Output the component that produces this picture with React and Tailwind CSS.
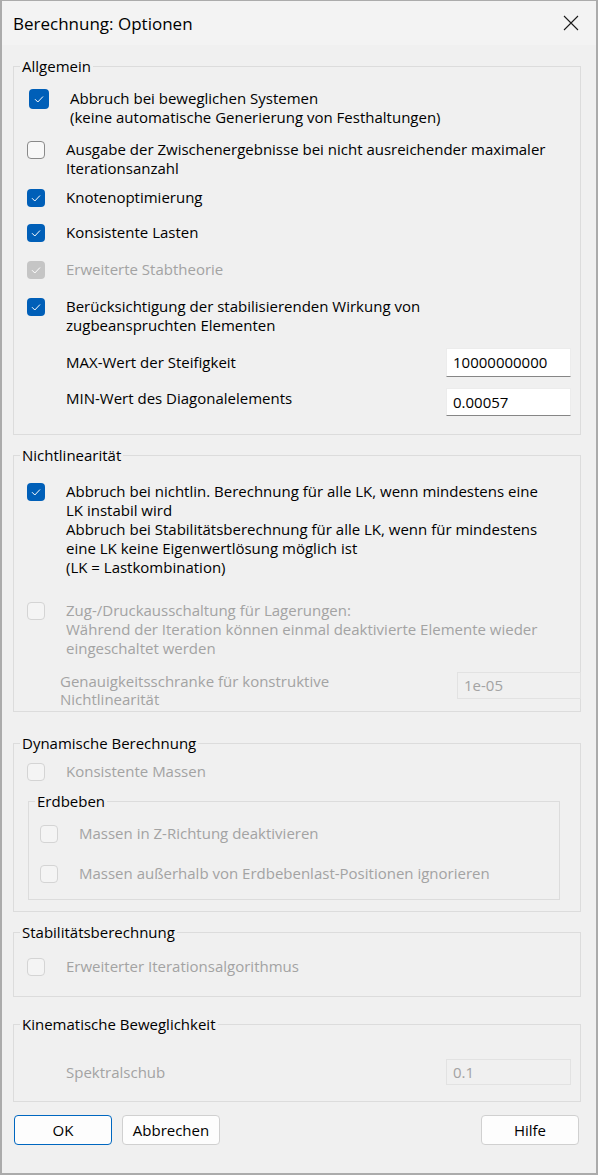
const FONT = "font-['Open_Sans','Noto_Sans',sans-serif]";

function Box({ checked, disabled, big }) {
  const size = big ? "w-[20px] h-[20px]" : "w-[18px] h-[18px]";
  let look = "border border-[#8a8a8a] bg-[#f8f8f8]";
  if (checked && !disabled) look = "bg-[#005fb8]";
  if (checked && disabled) look = "bg-[#c5c5c5]";
  if (!checked && disabled) look = "border border-[#d4d4d4] bg-[#f4f4f4]";
  return (
    <span className={`${size} ${look} flex shrink-0 items-center justify-center rounded-[4px]`}>
      {checked && (
        <svg width="10" height="8" viewBox="0 0 10 8" fill="none">
          <path d="M1 4.2 L3.8 7 L9 1.5" stroke="white" strokeWidth="1" />
        </svg>
      )}
    </span>
  );
}

function Row({ checked, disabled, big, className = "", gap = "gap-[21px]", children }) {
  return (
    <div className={`flex items-start ${gap} ${className}`}>
      <span className={big ? "mt-0" : "mt-px"}>
        <Box checked={checked} disabled={disabled} big={big} />
      </span>
      <div className={disabled ? "text-[#a3a3a3]" : "text-black"}>{children}</div>
    </div>
  );
}

function Group({ title, className = "", children }) {
  return (
    <fieldset className={`border border-[#dcdcdc] ${className}`}>
      <legend className="ml-[6px] px-[2px] text-[15px] leading-[20px] text-black">{title}</legend>
      {children}
    </fieldset>
  );
}

function Field({ value, disabled, className = "" }) {
  return (
    <div
      className={`flex items-center px-[6px] text-[15px] ${
        disabled
          ? "border border-[#e2e2e2] bg-[#f0f0f0] text-[#a3a3a3]"
          : "border border-[#ececec] border-b-[#868686] bg-white text-black"
      } ${className}`}
    >
      {value}
    </div>
  );
}

function Button({ children, primary }) {
  return (
    <button
      className={`h-[30px] w-[98px] rounded-[4px] bg-[#fdfdfd] text-[15px] text-black ${
        primary ? "border border-[#0067c0]" : "border border-[#d0d0d0]"
      }`}
    >
      {children}
    </button>
  );
}

export default function App() {
  return (
    <div
      className={`${FONT} flex h-[1175px] w-[598px] flex-col border-x-2 border-b-2 border-t border-[#ababab] bg-[#f0f0f0] text-[15px] leading-[19px]`}
    >
      <div className="flex h-[44px] shrink-0 items-center justify-between bg-[#f3f3f3] pl-[11px] pr-[17px]">
        <span className="text-[17px] text-black">Berechnung: Optionen</span>
        <svg width="16" height="16" viewBox="0 0 16 16" fill="none">
          <path d="M1 1 L15 15 M15 1 L1 15" stroke="#1a1a1a" strokeWidth="1.1" />
        </svg>
      </div>

      <div className="flex flex-1 flex-col pl-[11px] pr-[15px]">
        <Group title="Allgemein" className="mt-[11px] pb-[18px]">
          <div className="pl-[15px] pt-[13px]">
            <Row checked big>
              <div>Abbruch bei beweglichen Systemen</div>
              <div>(keine automatische Generierung von Festhaltungen)</div>
            </Row>
          </div>
          <div className="pl-[13px]">
            <Row className="mt-[13px]">
              <div>Ausgabe der Zwischenergebnisse bei nicht ausreichender maximaler</div>
              <div>Iterationsanzahl</div>
            </Row>
            <Row checked className="mt-[10px]">
              Knotenoptimierung
            </Row>
            <Row checked className="mt-[16px]">
              Konsistente Lasten
            </Row>
            <Row checked disabled className="mt-[18px]">
              Erweiterte Stabtheorie
            </Row>
            <Row checked className="mt-[18px]">
              <div>Berücksichtigung der stabilisierenden Wirkung von</div>
              <div>zugbeanspruchten Elementen</div>
            </Row>
          </div>
          <div className="mt-[13px] flex items-center justify-between pl-[52px] pr-[9px]">
            <span>MAX-Wert der Steifigkeit</span>
            <Field value="10000000000" className="h-[29px] w-[125px]" />
          </div>
          <div className="mt-[11px] flex items-start justify-between pl-[52px] pr-[9px]">
            <span className="mt-[1px]">MIN-Wert des Diagonalelements</span>
            <Field value="0.00057" className="h-[28px] w-[125px]" />
          </div>
        </Group>

        <Group title="Nichtlinearität" className="mt-[10px] pb-[3px]">
          <div className="pl-[13px]">
            <Row checked className="mt-[17px]">
              <div>Abbruch bei nichtlin. Berechnung für alle LK, wenn mindestens eine</div>
              <div>LK instabil wird</div>
              <div>Abbruch bei Stabilitätsberechnung für alle LK, wenn für mindestens</div>
              <div>eine LK keine Eigenwertlösung möglich ist</div>
              <div>(LK = Lastkombination)</div>
            </Row>
            <Row disabled className="mt-[24px]">
              <div>Zug-/Druckausschaltung für Lagerungen:</div>
              <div>Während der Iteration können einmal deaktivierte Elemente wieder</div>
              <div>eingeschaltet werden</div>
            </Row>
          </div>
          <div className="mt-[14px] flex items-start justify-between pl-[46px] text-[#a3a3a3]">
            <div className="leading-[18px]">
              <div>Genauigkeitsschranke für konstruktive</div>
              <div>Nichtlinearität</div>
            </div>
            <Field value="1e-05" disabled className="mr-[-1px] h-[27px] w-[124px]" />
          </div>
        </Group>

        <Group title="Dynamische Berechnung" className="mt-[21px] pb-[11px]">
          <div className="pl-[13px]">
            <Row disabled className="mt-[9px]">
              Konsistente Massen
            </Row>
          </div>
          <div className="pl-[14px] pr-[20px]">
            <Group title="Erdbeben" className="mt-[10px] pb-[16px]">
              <div className="pl-[11px]">
                <Row disabled className="mt-[13px]">
                  Massen in Z-Richtung deaktivieren
                </Row>
                <Row disabled className="mt-[21px]">
                  Massen außerhalb von Erdbebenlast-Positionen ignorieren
                </Row>
              </div>
            </Group>
          </div>
        </Group>

        <Group title="Stabilitätsberechnung" className="mt-[10px] pb-[20px]">
          <div className="pl-[13px]">
            <Row disabled className="mt-[15px]">
              Erweiterter Iterationsalgorithmus
            </Row>
          </div>
        </Group>

        <Group title="Kinematische Beweglichkeit" className="mt-[17px] pb-[16px]">
          <div className="mt-[25px] flex items-center justify-between pl-[52px] pr-[9px] text-[#a3a3a3]">
            <span>Spektralschub</span>
            <Field value="0.1" disabled className="h-[26px] w-[125px]" />
          </div>
        </Group>

        <div className="mt-[13px] flex items-center pl-[1px] pr-[2px]">
          <Button primary>OK</Button>
          <span className="ml-[10px]">
            <Button>Abbrechen</Button>
          </span>
          <span className="ml-auto">
            <Button>Hilfe</Button>
          </span>
        </div>
      </div>
    </div>
  );
}
